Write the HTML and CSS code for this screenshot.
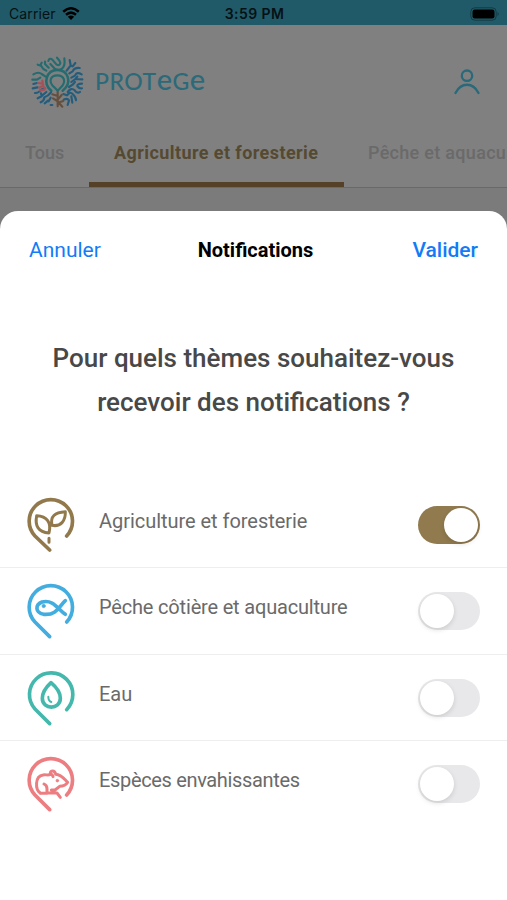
FILE: index.html
```html
<!DOCTYPE html>
<html lang="fr">
<head>
<meta charset="utf-8">
<title>Protege – Notifications</title>
<link rel="stylesheet" href="styles.css">
</head>
<body>
<div class="statusbar">
  <div class="carrier"><span class="carrier-name">Carrier</span>
    <svg class="wifi" viewBox="0 0 18 14"><path d="M1.2 4.7Q9-2.2 16.8 4.7M4 7.8Q9 3.4 14 7.8" fill="none" stroke="#000" stroke-width="2.5"/><path d="M5.8 9.7Q9 7.2 12.2 9.7L9 13Z"/></svg>
  </div>
  <span class="clock">3:59 PM</span>
  <svg class="battery" viewBox="0 0 30 14"><rect x=".8" y=".8" width="25.4" height="12.4" rx="4" fill="none" stroke="#123b45" stroke-width="1"/><rect x="2.5" y="2.5" width="22" height="9" rx="2.3"/><path d="M27.5 5Q30 7 27.5 9Z" fill="#123b45"/></svg>
</div>
<header class="header">
  <div class="brand">
    <svg class="emblem" viewBox="15 15 165 165" fill="none" stroke-linecap="round" stroke-linejoin="round" stroke-width="6.5">
      <g stroke="#246c70">
        <path d="M88 112C68 95 77 76 97 76C117 76 125 95 108 112L98 122Z"/>
        <path d="M79 122C51 100 65 60 97 60C130 60 143 99 113 122" stroke-width="7.5"/>
        <path d="M60 35V42L71 53M38 44L48 47L55 57L64 62M46 46L50 38M70 33Q73 22 82 29L94 43Q104 49 106 39Q106 34 96 23M76 42L88 55Q100 64 112 55Q121 47 118 25"/>
        <path d="M25 73Q41 64 50 72L62 80M22 89H36L46 83"/>
      </g>
      <g stroke="#245d7c">
        <path d="M134 30L137 46L125 62M151 39L143 49L137 47M164 54Q148 52 143 64L133 70M170 73Q155 64 150 77L139 83M139 96L151 87L172 88M151 87L157 80M132 111L143 104L150 96M171 101Q155 101 157 109Q164 117 171 115"/>
        <path d="M128 126Q139 111 149 121Q157 132 165 126M115 132L126 136Q135 123 143 132Q153 141 153 151M139 139L142 158M116 149Q127 143 132 151L128 165"/>
        <path d="M25 102L36 99M23 115L38 112M30 129Q40 130 47 120L55 116M38 145L50 139L48 130M50 138L64 126M47 157Q58 152 58 142Q70 138 78 127M59 160L69 152M77 143L71 154M77 165H82"/>
      </g>
      <path d="M39 99L53 101M42 113L53 108L61 115M52 92L55 107M45 121L59 119" stroke="#a3525a"/>
      <path d="M98 125V169M98 138L82 133M98 149L110 135M97 153L84 145M98 158L115 153M100 157L112 170" stroke="#65503e"/>
    </svg>
    <span class="wordmark">PROT<span class="round">e</span>G<span class="round">e</span></span>
  </div>
  <svg class="profile" viewBox="0 0 26 26" fill="none" stroke="#28697a" stroke-width="2.3" stroke-linecap="round"><circle cx="13" cy="6.7" r="5.2"/><path d="M1.5 24C7 13 19 13 24.5 24"/></svg>
</header>
<nav class="tabs">
  <span class="tab first">Tous</span>
  <span class="tab active">Agriculture et foresterie</span>
  <span class="tab last">Pêche et aquaculture</span>
</nav>
<main class="sheet">
  <div class="bar">
    <span class="action cancel">Annuler</span>
    <span class="title">Notifications</span>
    <span class="action submit">Valider</span>
  </div>
  <h1 class="question">Pour quels thèmes souhaitez-vous<br>recevoir des notifications ?</h1>
  <div class="list">
    <div class="row">
      <svg class="icon brown" viewBox="0 0 225 210"><path d="M155 138A65 65 0 1 0 60 138L104 180"/><path class="medium" d="M102 129C70 126 59 108 65 77C96 78 110 98 102 129ZM111 106C105 80 119 67 151 65C152 93 137 111 111 106ZM102 145V157"/></svg>
      <span class="label l1">Agriculture et foresterie</span><span class="switch on"></span>
    </div>
    <div class="row">
      <svg class="icon blue" viewBox="0 0 225 210"><path d="M155 138A65 65 0 1 0 60 138L104 182"/><path d="M151 74C132 90 126 119 86 115C60 109 60 87 81 78C115 69 129 100 151 115"/><circle class="dot" cx="86" cy="90" r="5"/></svg>
      <span class="label l2">Pêche côtière et aquaculture</span><span class="switch"></span>
    </div>
    <div class="row">
      <svg class="icon teal" viewBox="0 0 225 210"><path d="M155 140A65 65 0 1 0 60 138L104 182"/><path d="M108 59C97 69 82 87 82 106C82 141 136 141 136 106C136 87 120 69 108 59Z"/><path class="thin" d="M100 101Q100 114 109 117"/></svg>
      <span class="label l3">Eau</span><span class="switch"></span>
    </div>
    <div class="row">
      <svg class="icon pink" viewBox="0 0 225 210"><path d="M155 138A65 65 0 1 0 60 138L104 182"/><path class="medium" d="M77 133C59 122 60 81 84 78C92 76 99 80 107 76C102 63 120 62 122 76C139 77 146 88 158 100Q151 112 134 112L120 123M76 133H96V119Q96 109 87 105M96 132H126L136 145M109 123H120M107 76Q112 76 114 83"/><circle class="dot" cx="127" cy="95" r="4"/></svg>
      <span class="label l4">Espèces envahissantes</span><span class="switch"></span>
    </div>
  </div>
</main>
</body>
</html>
```
FILE: styles.css
```css
* { box-sizing: border-box; }
body {
  margin: 0;
  width: 507px;
  height: 900px;
  overflow: hidden;
  display: flex;
  flex-direction: column;
  background: #7b7b7b;
  font-family: Roboto, "Liberation Sans", sans-serif;
  white-space: nowrap;
}
.statusbar {
  height: 25px;
  flex: none;
  display: grid;
  grid-template-columns: 1fr auto 1fr;
  align-items: center;
  padding: 2px 7px 0 9px;
  background: #205a68;
  color: #061115;
  font: 14px/20px Inter, sans-serif;
}
.carrier { display: flex; align-items: center; gap: 6px; }
.carrier-name { letter-spacing: 0.1px; }
.wifi { width: 18px; height: 14px; }
.clock { font-weight: 600; font-size: 14px; letter-spacing: 0.4px; }
.battery { width: 30px; height: 14px; justify-self: end; }
.header {
  height: 102px;
  flex: none;
  display: flex;
  justify-content: space-between;
  padding: 30px 27px 0 30px;
  background: #808080;
}
.brand { display: flex; }
.emblem { width: 55px; height: 55px; }
.wordmark {
  margin: 9px 0 0 10px;
  height: 34px;
  font: 500 23px/34px Lato, sans-serif;
  letter-spacing: 0.5px;
  color: #2c6a7a;
}
.round { font-size: 29px; line-height: 30px; }
.profile { width: 26px; height: 26px; margin-top: 14px; }
.tabs {
  height: 61px;
  flex: none;
  display: flex;
  overflow: hidden;
  background: #808080;
  border-bottom: 1px solid #696969;
}
.tab {
  flex: none;
  height: 60px;
  padding: 14px 25px 0;
  font-size: 18px;
  line-height: 24px;
  font-weight: 500;
  color: #6a6a6a;
}
.first { width: 89px; }
.active {
  width: 255px;
  font-weight: 700;
  letter-spacing: 0.42px;
  color: #554a31;
  border-bottom: 5px solid #554127;
}
.last { padding-left: 24px; letter-spacing: 0.3px; }
.sheet {
  flex: 1;
  margin-top: 23px;
  background: #fff;
  border-radius: 18px 18px 0 0;
}
.bar {
  height: 78px;
  display: grid;
  grid-template-columns: 1fr auto 1fr;
  align-items: center;
  padding: 0 29px;
}
.action { font-size: 21px; color: #127cf7; }
.submit { justify-self: end; font-weight: 500; }
.title { padding-left: 4px; font-size: 20px; font-weight: 700; color: #000; }
.question {
  margin: 48px 0 0;
  text-align: center;
  font-size: 26px;
  line-height: 43.5px;
  font-weight: 500;
  color: #484848;
}
.list { margin-top: 57.5px; }
.row {
  height: 86.6px;
  display: flex;
  padding: 0 27px 0 15px;
  border-bottom: 1px solid #eeeeef;
}
.row:last-child { border-bottom: 0; }
.icon {
  width: 75px;
  height: 70px;
  margin-top: 8px;
  fill: none;
  stroke-width: 11;
  stroke-linecap: round;
  stroke-linejoin: round;
}
.brown { stroke: #92794c; }
.blue { stroke: #43addf; }
.teal { stroke: #45b8ad; }
.pink { stroke: #ec7e82; }
.thin { stroke-width: 6; }
.medium { stroke-width: 9; }
.dot { stroke-width: 2; }
.blue .dot { fill: #43addf; }
.pink .dot { fill: #ec7e82; }
.label {
  margin: 25px 0 0 9px;
  height: 28px;
  font-size: 20px;
  line-height: 28px;
  color: #6a6a6a;
}
.l1 { letter-spacing: -0.04px; }
.l2 { letter-spacing: -0.18px; }
.l4 { letter-spacing: -0.34px; }
.switch {
  flex: none;
  width: 62px;
  height: 38px;
  margin: 24px 0 0 auto;
  padding: 2px;
  border-radius: 19px;
  background: #e8e8ea;
}
.switch::before {
  content: "";
  display: block;
  width: 34px;
  height: 34px;
  border-radius: 50%;
  background: #fff;
  box-shadow: 0 2px 5px #00000020;
}
.on { background: #907a4e; }
.on::before { margin-left: auto; }
```
